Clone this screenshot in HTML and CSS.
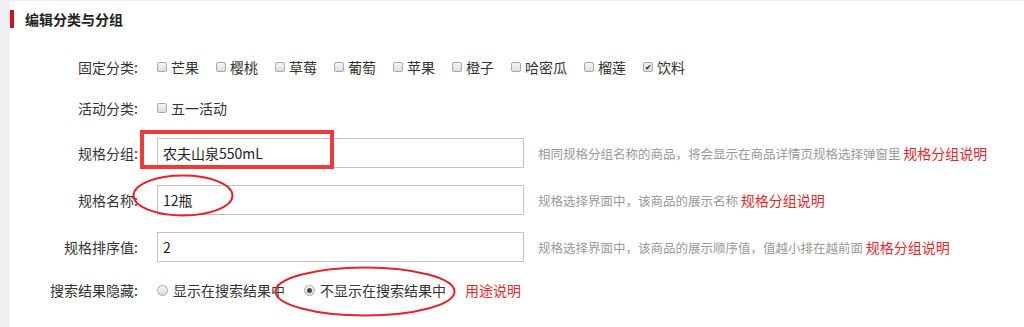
FILE: index.html
```html
<!DOCTYPE html>
<html lang="zh-CN">
<head>
<meta charset="UTF-8">
<title>编辑分类与分组</title>
<link rel="stylesheet" href="styles.css">
</head>
<body>
<div class="page">
<div class="side"></div>
<div class="panel">
<h2 class="title">编辑分类与分组</h2>

<div class="form">
<div class="row row-check">
<span class="label">固定分类:</span>
<div class="opts">
<label class="opt"><span class="cb"></span>芒果</label>
<label class="opt"><span class="cb"></span>樱桃</label>
<label class="opt"><span class="cb"></span>草莓</label>
<label class="opt"><span class="cb"></span>葡萄</label>
<label class="opt"><span class="cb"></span>苹果</label>
<label class="opt"><span class="cb"></span>橙子</label>
<label class="opt"><span class="cb"></span>哈密瓜</label>
<label class="opt"><span class="cb"></span>榴莲</label>
<label class="opt"><span class="cb on">&#10004;</span>饮料</label>
</div>
</div>

<div class="row row-check second">
<span class="label">活动分类:</span>
<div class="opts">
<label class="opt"><span class="cb"></span>五一活动</label>
</div>
</div>

<div class="row row-field first-field">
<span class="label">规格分组:</span>
<div class="input">农夫山泉550mL</div>
<span class="help">相同规格分组名称的商品，将会显示在商品详情页规格选择弹窗里 <a class="link">规格分组说明</a></span>
<div class="mark-rect"></div>
</div>

<div class="row row-field">
<span class="label">规格名称:</span>
<div class="input">12瓶</div>
<span class="help">规格选择界面中，该商品的展示名称 <a class="link">规格分组说明</a></span>
<svg class="mark-oval oval-a" width="102" height="43" viewBox="0 0 102 43"><ellipse cx="51" cy="21.5" rx="49.5" ry="20" fill="none" stroke="#e3242b" stroke-width="2"/></svg>
</div>

<div class="row row-field">
<span class="label">规格排序值:</span>
<div class="input">2</div>
<span class="help">规格选择界面中，该商品的展示顺序值，值越小排在越前面 <a class="link">规格分组说明</a></span>
</div>

<div class="row row-check last">
<span class="label">搜索结果隐藏:</span>
<div class="opts radios">
<label class="opt"><span class="rd"></span>显示在搜索结果中</label>
<label class="opt"><span class="rd on"></span>不显示在搜索结果中</label>
<a class="link">用途说明</a>
</div>
<svg class="mark-oval oval-b" width="182" height="51" viewBox="0 0 182 51"><ellipse cx="91" cy="25.5" rx="89.5" ry="24" fill="none" stroke="#e3242b" stroke-width="2"/></svg>
</div>
</div>
</div>
</div>
</body>
</html>
```

FILE: styles.css
```css
body{margin:0;background:#fff;color:#333;font-family:"Noto Sans CJK SC","Microsoft YaHei",sans-serif;font-size:14px}
.page{display:flex;height:327px;border-top:1px solid #eee;box-sizing:border-box}
.side{width:10px;background:#efeff4;flex:none}
.panel{flex:1}
.title{margin:0;display:flex;align-items:center;font-size:14px;font-weight:bold;color:#222;border-left:4px solid #d0121b;height:18px;margin-top:9px;padding-left:11px}
.form{padding-top:24px}
.row{position:relative;display:flex;align-items:center;height:30px}
.second{margin-top:11px}
.row-field{margin-top:17px}
.first-field{margin-top:15px}
.last{margin-top:13px}
.label{width:128px;text-align:right;flex:none;color:#333;margin-right:19px}
.opts{display:flex;align-items:center;gap:17px}
.radios{gap:19px}
.opt{display:flex;align-items:center;color:#333}
.cb{width:8px;height:8px;border:1px solid #a9a9a9;border-radius:2px;background:linear-gradient(#f4f4f4,#dedede);margin-right:4px;font-size:8px;line-height:8px;text-align:center;color:#222}
.rd{width:9px;height:9px;border:1px solid #a9a9a9;border-radius:50%;background:linear-gradient(#f4f4f4,#dedede);margin-right:5px;position:relative}
.rd.on::after{content:"";position:absolute;left:2px;top:2px;width:5px;height:5px;border-radius:50%;background:#444}
.input{width:355px;height:28px;border:1px solid #c2c2c2;padding:0 5px;line-height:28px;flex:none;color:#222}
.help{margin-left:14px;font-size:12.5px;color:#999;white-space:nowrap}
.link{color:#e0262f;font-size:14px}
.mark-rect{position:absolute;left:130px;top:-8px;width:186px;height:31px;border:4.5px solid #f03a3a}
.mark-oval{position:absolute}
.oval-a{left:122px;top:-11px}
.oval-b{left:264px;top:-9px}
```
